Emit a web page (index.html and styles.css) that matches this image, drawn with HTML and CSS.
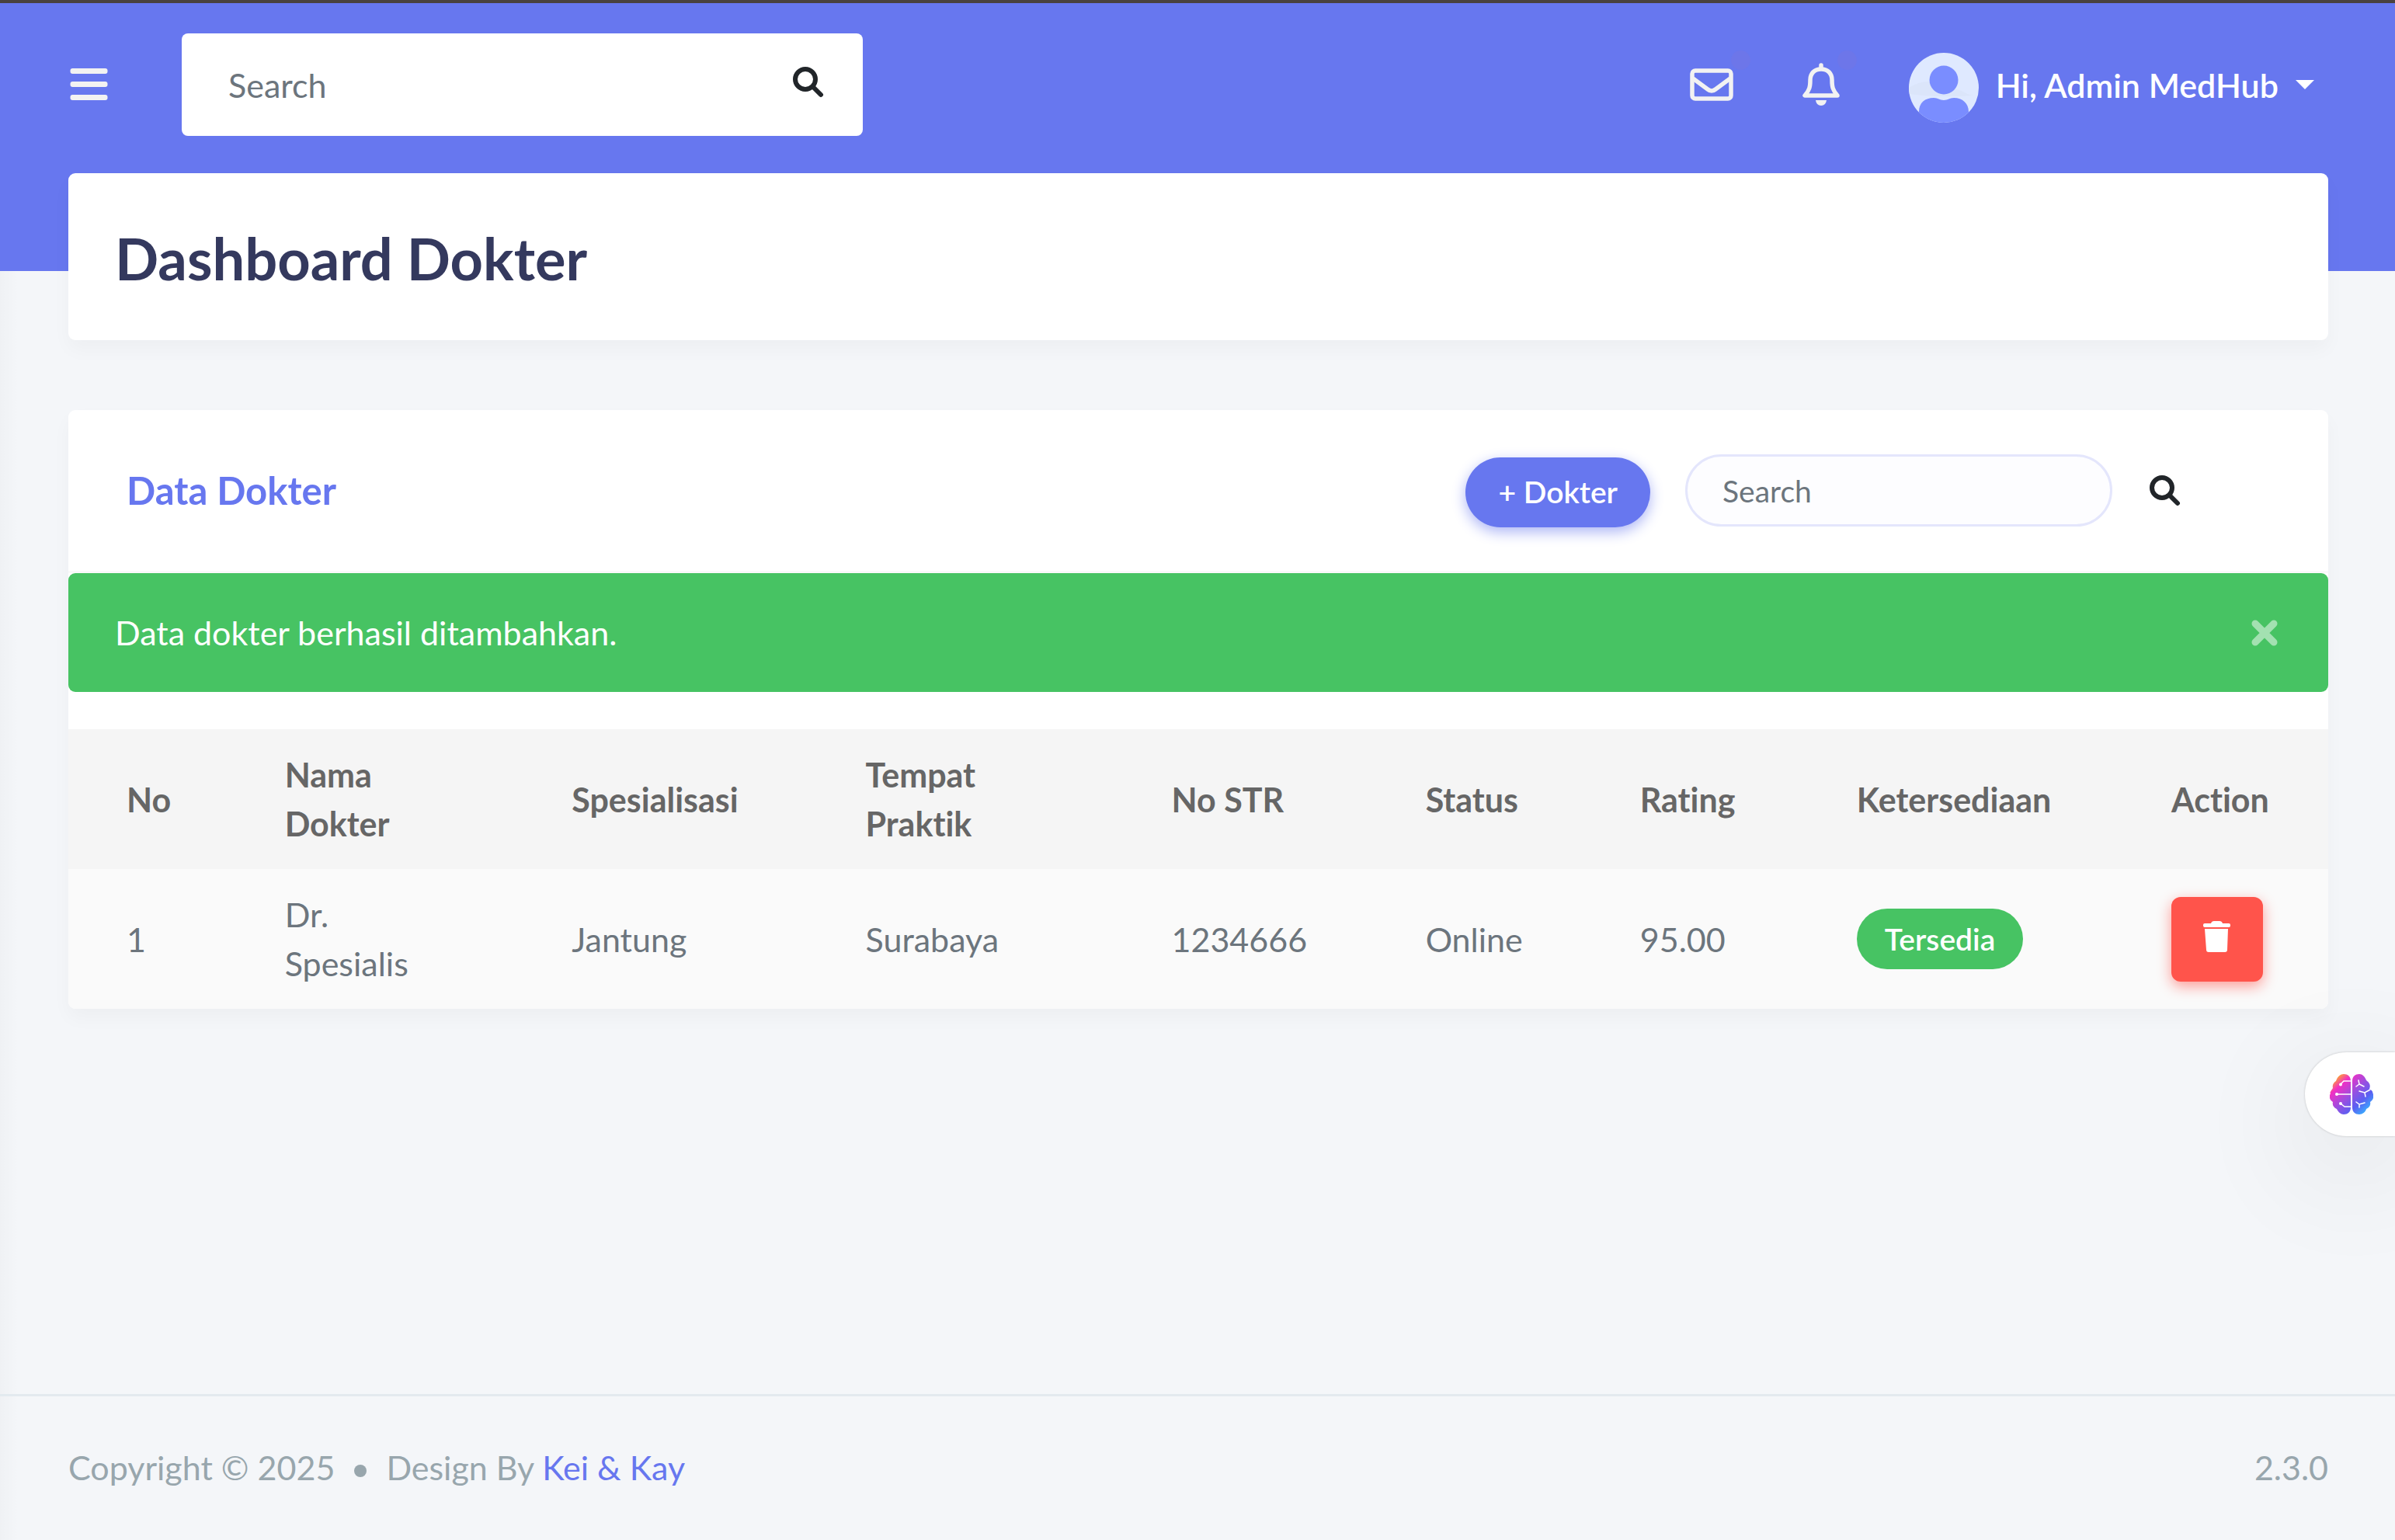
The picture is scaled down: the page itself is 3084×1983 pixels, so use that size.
FILE: index.html
```html
<!DOCTYPE html>
<html lang="id">
<head>
<meta charset="utf-8">
<title>Dashboard Dokter</title>
<meta name="viewport" content="width=device-width, initial-scale=1">
<link rel="stylesheet" href="styles.css">
</head>
<body>
<div class="hero">
  <header class="navbar">
    <button class="icon-button menu-toggle" aria-label="Menu">
      <svg class="icon-menu" viewBox="0 0 48 42" fill="#f2f2f2"><rect width="48" height="7" rx="3"/><rect y="17" width="48" height="7" rx="3"/><rect y="34" width="48" height="7" rx="3"/></svg>
    </button>
    <form class="nav-search">
      <input type="search" placeholder="Search" aria-label="Search">
      <button type="button" class="icon-button" aria-label="Search">
        <svg class="icon-search" viewBox="0 0 40 40" fill="none" stroke="#212529" stroke-width="6" stroke-linecap="round"><circle cx="16" cy="16" r="13"/><path d="M26 26l10 10"/></svg>
      </button>
    </form>
    <nav class="nav-right">
      <button class="icon-button has-dot" aria-label="Messages">
        <svg class="icon-mail" viewBox="0 0 56 56" fill="none" stroke="#f2f2f2" stroke-width="5.500" stroke-linejoin="round"><rect x="3" y="10" width="50" height="36" rx="4"/><path d="M4 20L23 34q5 4 10 0L52 20"/></svg>
      </button>
      <button class="icon-button has-dot" aria-label="Notifications">
        <svg class="icon-bell" viewBox="0 0 48 56" fill="none" stroke="#f2f2f2" stroke-width="5.500" stroke-linecap="round" stroke-linejoin="round"><path d="M24 3v4M24 8C15 8 10 14 10 22c0 9-1 13-7 20h42c-6-7-7-11-7-20 0-8-5-14-14-14z"/><path d="M17 48h14q-1 7-7 7t-7-7z" fill="#f2f2f2" stroke="none"/></svg>
      </button>
      <button class="user-menu">
        <svg class="avatar" viewBox="0 0 90 90"><defs><clipPath id="face"><circle cx="45" cy="45" r="45"/></clipPath></defs><g clip-path="url(#face)"><rect width="90" height="90" fill="#dfe9ff"/><path d="M0 45q14-9 28-8l40 12q12 8 22 5-20 3-44 2-24 0-46-3z" fill="#dbe5fa"/><path d="M13 90V76c0-12 8-18 19-18 6 0 7 3 13 3s7-3 13-3c11 0 19 7 19 18v14z" fill="#7a8dff"/><circle cx="45" cy="35" r="18.500" fill="#7a8dff"/></g></svg>
        <span>Hi, Admin MedHub</span>
        <i class="caret"></i>
      </button>
    </nav>
  </header>
</div>
<main class="content">
  <section class="card title-card"><h1>Dashboard Dokter</h1></section>
  <section class="card data-card">
    <header class="card-header">
      <h2>Data Dokter</h2>
      <button class="add-button">+ Dokter</button>
      <form class="table-search">
        <input type="search" placeholder="Search" aria-label="Search dokter">
        <button type="button" class="icon-button" aria-label="Search dokter">
          <svg class="icon-search" viewBox="0 0 40 40" fill="none" stroke="#212529" stroke-width="6" stroke-linecap="round"><circle cx="16" cy="16" r="13"/><path d="M26 26l10 10"/></svg>
        </button>
      </form>
    </header>
    <div class="alert" role="alert">
      <span>Data dokter berhasil ditambahkan.</span>
      <button class="icon-button" aria-label="Close">
        <svg class="icon-close" viewBox="0 0 36 36" stroke="#a3e1b1" stroke-width="9" stroke-linecap="round"><path d="M6 6l24 24M30 6L6 30"/></svg>
      </button>
    </div>
    <table class="doctors">
      <thead><tr><th class="c-no">No</th><th class="c-name">Nama Dokter</th><th class="c-spec">Spesialisasi</th><th class="c-place">Tempat Praktik</th><th class="c-str">No STR</th><th class="c-status">Status</th><th class="c-rating">Rating</th><th class="c-avail">Ketersediaan</th><th class="c-action">Action</th></tr></thead>
      <tbody><tr><td>1</td><td>Dr. Spesialis</td><td>Jantung</td><td>Surabaya</td><td>1234666</td><td>Online</td><td>95.00</td><td><span class="badge">Tersedia</span></td><td>
        <button class="delete-button" aria-label="Hapus"><svg class="icon-trash" viewBox="0 0 35 40" fill="#fff"><path d="M2 3h8q1-3 4-3h7q3 0 4 3h8q2 0 2 2v1q0 2-2 2H2Q0 8 0 6V5q0-2 2-2zM2 10h30l-1 27q0 3-3 3H7q-3 0-3-3z"/></svg></button></td></tr></tbody>
    </table>
  </section>
</main>
<button class="assistant" aria-label="Assistant">
  <svg class="icon-brain" viewBox="0 0 56 52"><defs><linearGradient id="brain" x1="0" y1="0" x2="1" y2="1"><stop offset=".1" stop-color="#ffb01f"/><stop offset=".26" stop-color="#f22fc4"/><stop offset=".5" stop-color="#9a4fe0"/><stop offset=".7" stop-color="#5b5ff2"/><stop offset=".9" stop-color="#36b4ff"/></linearGradient></defs>
    <path fill="url(#brain)" d="M27 9v34c0 6-4 9-9 9-4 0-7-3-9-7-4-2-6-5-5-9-5-3-5-8-3-11-1-1-1-1 3-7-1-4 1-7 4-9 2-6 6-9 10-9 5 0 9 3 9 9zM29 9v34c0 6 4 9 9 9 4 0 8-3 9-7 4-2 6-5 5-9 5-3 5-8 3-13 0-1-1-2-4-4 2-4 0-8-4-11-2-5-5-8-9-8-5 0-9 3-9 9z"/>
    <path fill="none" stroke="#fff" stroke-width="1.500" stroke-linecap="round" d="M27 9h-9l-4 4M27 26H9M27 42h-8l-5-4M37 8l1 5-4 3M38 13l6 3M38 22l7 2 7-4M45 24l1 5M34 36l4 3 7-2M38 39v4"/>
    <g fill="#fff"><circle cx="14" cy="13.500" r="2"/><circle cx="9" cy="26" r="2"/><circle cx="14" cy="38" r="2"/></g></svg>
</button>
<footer class="footer">
  <p>Copyright © 2025 <i class="bullet"></i> Design By <a href="#">Kei &amp; Kay</a></p>
  <p>2.3.0</p>
</footer>
</body>
</html>
```
FILE: styles.css
```css
* { box-sizing: border-box; }
body {
  margin: 0;
  min-height: 100vh;
  display: flex;
  flex-direction: column;
  background: #f4f6f9 linear-gradient(90deg, rgba(0, 0, 0, 0.02), transparent 24px);
  color: #6c757d;
  font-family: Lato, "Open Sans", sans-serif;
  font-size: 43px;
  font-variant-ligatures: none;
  line-height: 63px;
  overflow-x: hidden;
}
h1, h2, p { margin: 0; }
button, input { font: inherit; }
button { cursor: pointer; border: 0; padding: 0; }
svg { display: block; flex: none; }
a { color: #6777ef; text-decoration: none; }
.icon-button { background: none; }

.hero {
  height: 349px;
  flex: none;
  background: #6777ef;
  border-top: 4px solid #49423f;
}
.navbar {
  display: flex;
  align-items: center;
  padding: 39px 104px 0 90px;
}
.nav-search {
  display: flex;
  align-items: center;
  width: 877px;
  height: 132px;
  margin-left: 95px;
  padding: 0 50px 6px 60px;
  border-radius: 8px;
  background: #fff;
}
.nav-search input {
  flex: 1;
  min-width: 0;
  border: 0;
  padding: 6px 0 0;
  background: none;
}
input::placeholder { color: #6c757d; opacity: 1; }
.nav-right {
  display: flex;
  align-items: center;
  gap: 89px;
  margin-left: auto;
}
.has-dot { position: relative; }
.has-dot::after {
  content: "";
  position: absolute;
  top: -16px;
  right: -22px;
  width: 25px;
  height: 25px;
  border-radius: 50%;
  background: #6d76e9;
}
.user-menu {
  display: flex;
  align-items: center;
  gap: 22px;
  background: none;
  color: #fff;
  font-weight: 600;
}
.caret {
  border: 12px solid transparent;
  border-top-color: #fff;
  border-bottom: 0;
}
.icon-menu { width: 49px; height: 42px; }
.icon-search { width: 40px; height: 40px; }
.icon-mail { width: 56px; height: 56px; }
.icon-bell { width: 48px; height: 56px; }
.avatar { width: 90px; height: 90px; margin-top: 8px; }

.content {
  flex: 1;
  margin-top: -126px;
  padding: 0 86px 0 88px;
}
.card {
  background: #fff;
  border-radius: 9px;
  box-shadow: 0 12px 24px rgba(0, 0, 0, 0.03);
}
.title-card {
  padding: 64px 60px 60px;
  margin-bottom: 90px;
}
h1 {
  color: #34395e;
  font-size: 74px;
  font-weight: 700;
  line-height: 91px;
}
.card-header {
  display: flex;
  align-items: center;
  height: 210px;
  padding: 0 190px 0 75px;
  border-bottom: 3px solid #f9f9f9;
}
h2 {
  flex: 1;
  color: #6777ef;
  font-size: 49px;
  font-weight: 700;
}
.add-button {
  height: 90px;
  margin-top: 4px;
  padding: 0 42px;
  border-radius: 45px;
  background: #6777ef;
  box-shadow: 0 6px 18px #acb5f6;
  color: #fff;
  font-size: 39px;
  font-weight: 600;
}
.table-search {
  display: flex;
  align-items: center;
  gap: 48px;
  margin-left: 45px;
}
.table-search input {
  width: 550px;
  height: 93px;
  padding: 0 45px;
  border: 3px solid #e4e6fc;
  border-radius: 47px;
  background: #fdfdff;
  font-size: 39px;
}
.alert {
  display: flex;
  align-items: center;
  justify-content: space-between;
  height: 153px;
  margin-bottom: 48px;
  padding: 0 64px 0 60px;
  border-radius: 9px;
  background: #47c363;
  color: #fff;
}
.icon-close { width: 36px; height: 36px; }

.doctors {
  width: 100%;
  table-layout: fixed;
  border-collapse: collapse;
}
.doctors th, .doctors td {
  height: 180px;
  padding: 0 75px;
  text-align: left;
  vertical-align: middle;
}
.doctors th { background: #f5f5f5; color: #666; font-weight: 700; }
.doctors td { background: #fafafa; }
.doctors td:first-child { border-bottom-left-radius: 9px; }
.doctors td:last-child { border-bottom-right-radius: 9px; }
.doctors th:last-child, .doctors td:last-child { padding-right: 0; }
.c-no { width: 7%; }
.c-name { width: 12.700%; }
.c-spec { width: 13%; }
.c-place { width: 13.540%; }
.c-str { width: 11.240%; }
.c-status { width: 9.490%; }
.c-rating { width: 9.590%; }
.c-avail { width: 13.920%; }
.badge {
  display: inline-flex;
  align-items: center;
  height: 78px;
  padding: 0 36px;
  border-radius: 39px;
  background: #47c363;
  color: #fff;
  font-size: 39px;
  font-weight: 600;
}
.delete-button {
  display: flex;
  align-items: center;
  justify-content: center;
  width: 118px;
  height: 109px;
  padding-bottom: 6px;
  border-radius: 12px;
  background: #ff544b;
  box-shadow: 0 6px 18px #fd9b96;
}
.icon-trash { width: 35px; height: 40px; }

.assistant {
  position: absolute;
  right: 0;
  top: 1355px;
  width: 116px;
  height: 108px;
  padding-left: 32px;
  border-radius: 54px 0 0 54px;
  background: #fff;
  box-shadow: 0 0 3px rgba(0, 0, 0, 0.2), 0 36px 160px rgba(0, 0, 0, 0.12);
}
.icon-brain { width: 56px; height: 52px; }

.footer {
  display: flex;
  justify-content: space-between;
  padding: 60px 86px 62px 88px;
  border-top: 3px solid #e3eaef;
  color: #98a6ad;
}
.bullet {
  display: inline-block;
  width: 16px;
  height: 16px;
  margin: 0 14px;
  border-radius: 8px;
  background: #98a6ad;
  vertical-align: 4px;
}
```
